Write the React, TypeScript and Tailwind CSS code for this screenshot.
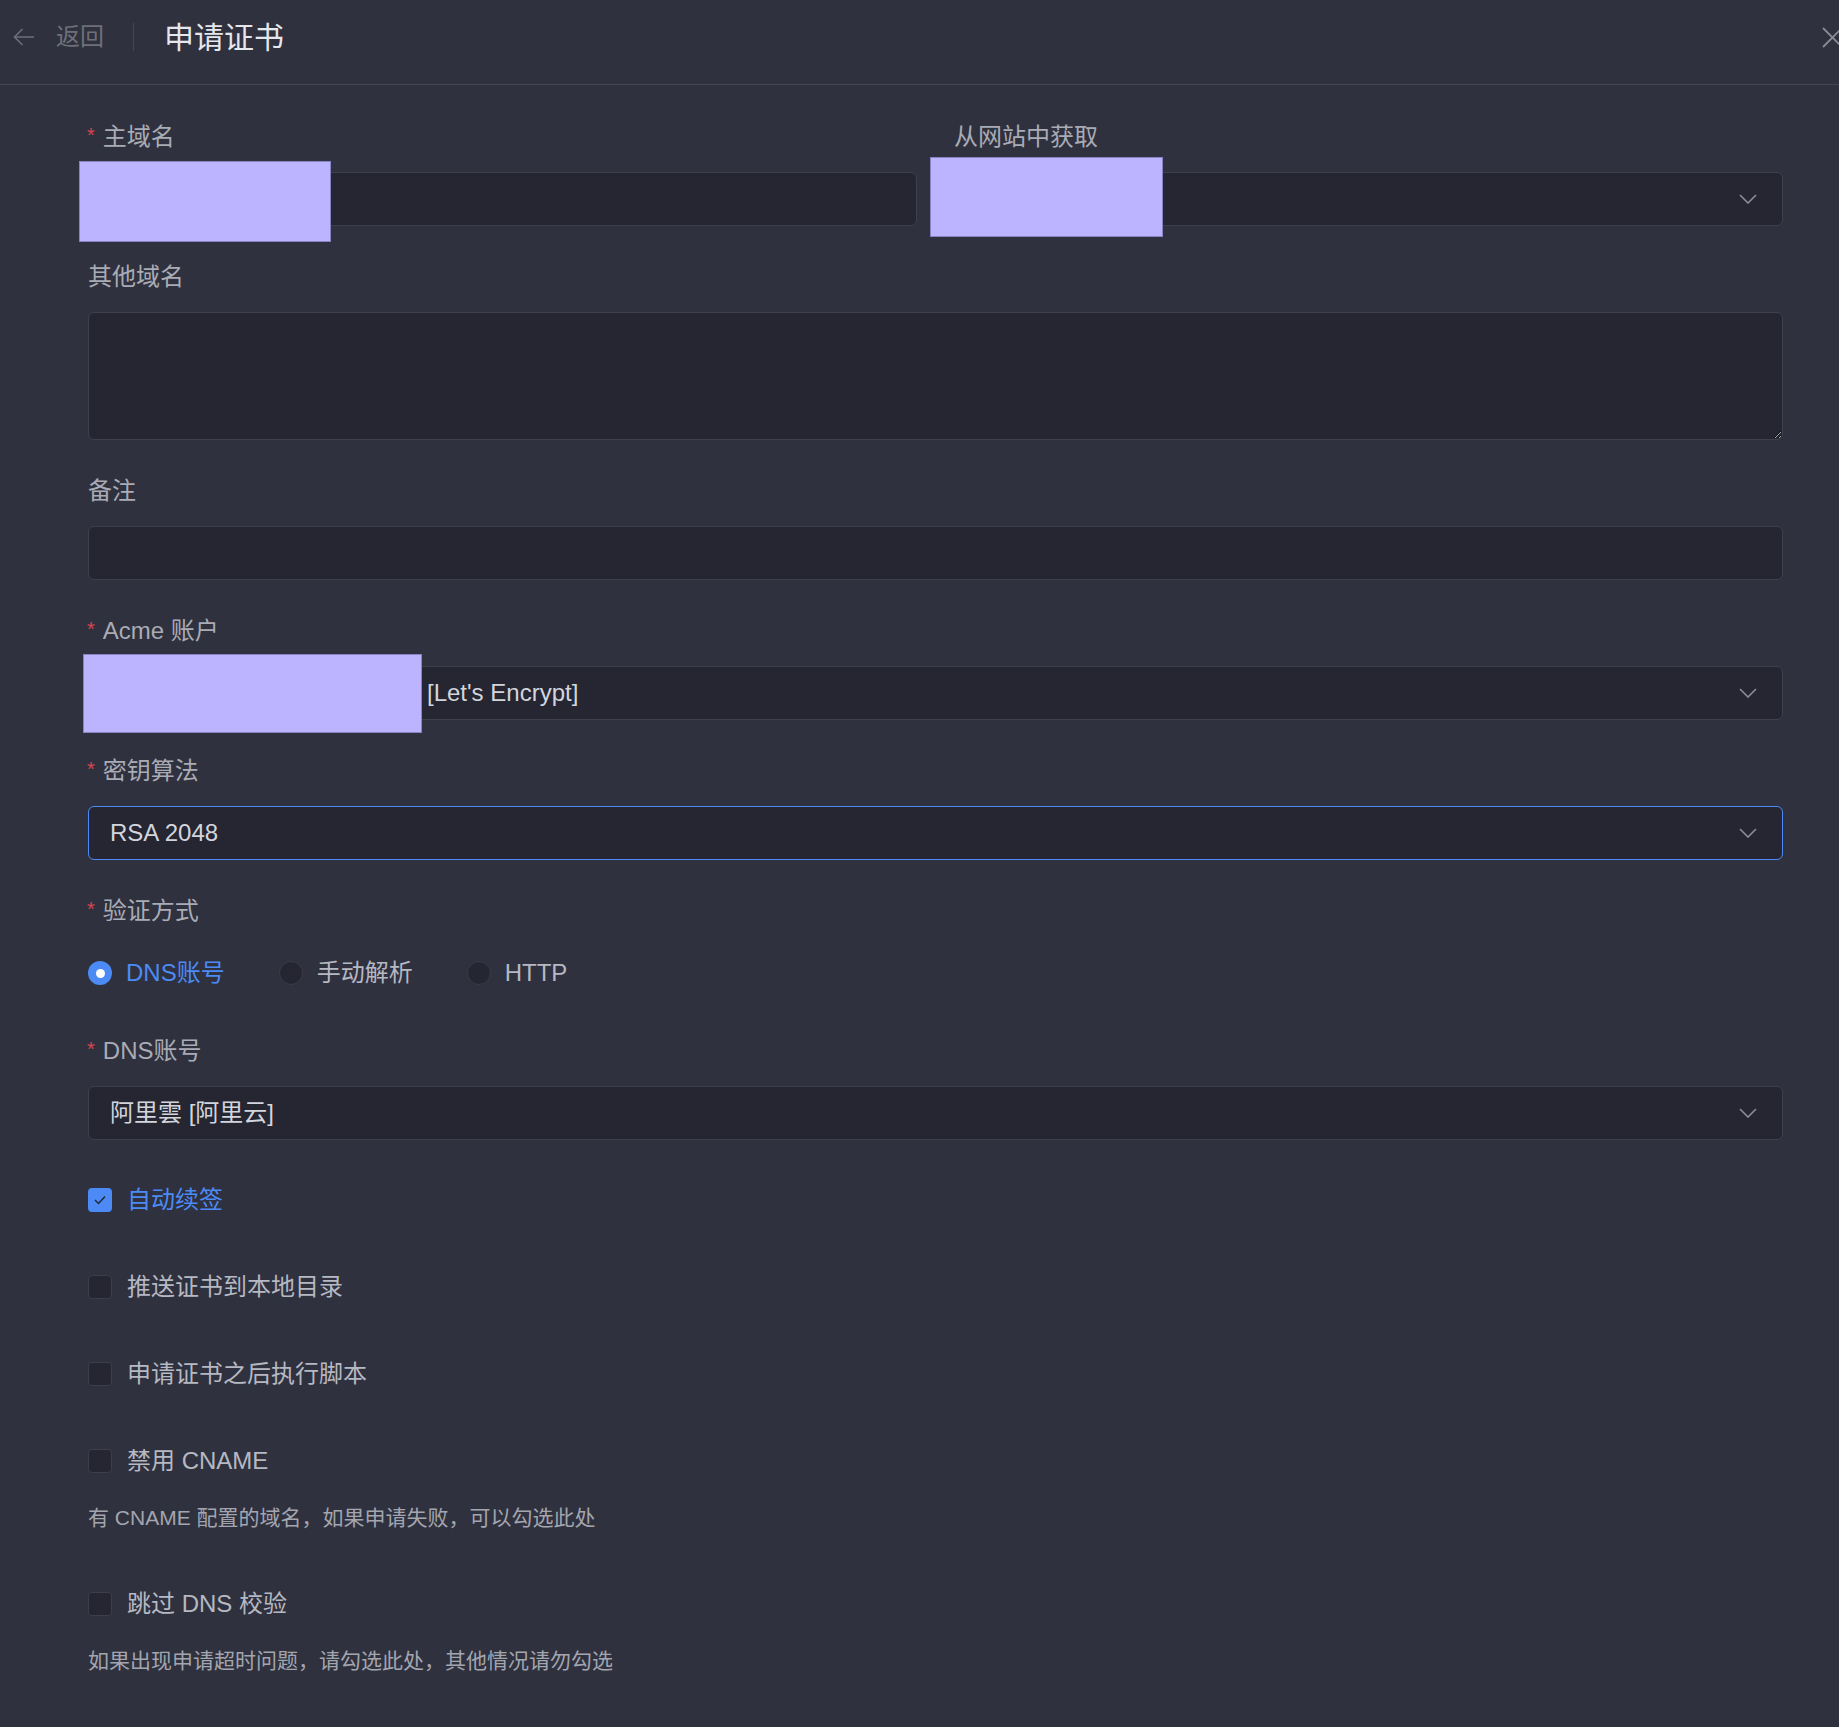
import React from 'react';

/**
 * 申请证书 form (dark theme)
 */

const font = "font-['Liberation_Sans','Noto_Sans_CJK_SC',sans-serif]";

function Chevron() {
  return (
    <svg width="18" height="10" viewBox="0 0 18 10" fill="none" className="shrink-0">
      <path d="M1 1L9 9L17 1" stroke="#8b8d97" strokeWidth="1.6" />
    </svg>
  );
}

function Label({ text, required }: { text: string; required?: boolean }) {
  return (
    <div className="flex items-center h-[36px] mb-[17px] text-[24px] text-[#a9abb5]">
      {required && <span className="text-[#dc4450] text-[20px] mr-[8px] -ml-[1px] -mt-[4px]">*</span>}
      <span>{text}</span>
    </div>
  );
}

function Select({ children, active }: { children?: React.ReactNode; active?: boolean }) {
  return (
    <div
      className={`flex items-center h-[54px] rounded-[6px] border bg-[#252631] pl-[21px] pr-[25px] ${
        active ? 'border-[#4c8bf5]' : 'border-[#3e404c]'
      }`}
    >
      <div className="flex-1 text-[24px] text-[#d3d5dd] whitespace-nowrap">{children}</div>
      <Chevron />
    </div>
  );
}

function Input() {
  return <div className="h-[54px] rounded-[6px] border border-[#3e404c] bg-[#252631]" />;
}

function Redact({ className }: { className: string }) {
  return <div className={`absolute bg-[#bcb4fe] border border-[#8883c2] ${className}`} />;
}

function Radio({ label, checked }: { label: string; checked?: boolean }) {
  return (
    <div className="flex items-center gap-[14px]">
      {checked ? (
        <span className="w-[24px] h-[24px] rounded-full bg-[#4c8bf5] flex items-center justify-center">
          <span className="w-[9px] h-[9px] rounded-full bg-white" />
        </span>
      ) : (
        <span className="w-[24px] h-[24px] rounded-full bg-[#252631] border border-[#3a3c48]" />
      )}
      <span className={`text-[24px] ${checked ? 'text-[#4c8bf5]' : 'text-[#b6b8c2]'}`}>{label}</span>
    </div>
  );
}

function Check({ label, checked, help }: { label: string; checked?: boolean; help?: string }) {
  return (
    <div className={help ? 'mb-[44px]' : 'mb-[33px]'}>
      <div className="flex items-center h-[54px] gap-[15px]">
        {checked ? (
          <span className="w-[24px] h-[24px] rounded-[4px] bg-[#4c8bf5] flex items-center justify-center">
            <svg width="12" height="10" viewBox="0 0 12 10" fill="none">
              <path d="M1 5L4.5 8.5L11 1.5" stroke="#23252f" strokeWidth="1.4" />
            </svg>
          </span>
        ) : (
          <span className="w-[24px] h-[24px] rounded-[4px] bg-[#252631] border border-[#3c3e4a]" />
        )}
        <span className={`text-[24px] ${checked ? 'text-[#4c8bf5]' : 'text-[#b6b8c2]'}`}>{label}</span>
      </div>
      {help && <p className="mt-[15px] text-[21px] leading-[30px] text-[#a3a5af]">{help}</p>}
    </div>
  );
}

export default function App() {
  return (
    <div className={`min-h-screen w-[1839px] overflow-hidden bg-[#2f313e] ${font}`}>
      {/* Header */}
      <div className="h-[85px] border-b border-[#45474f] flex items-start pt-[19px] pl-[13px]">
        <div className="flex items-center h-[36px] w-full">
          <svg width="22" height="18" viewBox="0 0 22 18" fill="none">
            <path d="M21 9H1.5M9.5 1L1.5 9L9.5 17" stroke="#6d6f79" strokeWidth="1.6" />
          </svg>
          <span className="ml-[21px] text-[24px] text-[#6e7079]">返回</span>
          <span className="ml-[29px] w-px h-[28px] bg-[#45474f]" />
          <span className="ml-[30px] text-[30px] text-[#e6e7ec]">申请证书</span>
          <svg width="21" height="21" viewBox="0 0 21 21" fill="none" className="ml-auto -mr-[4px] shrink-0">
            <path d="M1 1L20 20M20 1L1 20" stroke="#8a8b93" strokeWidth="1.8" />
          </svg>
        </div>
      </div>

      {/* Form */}
      <div className="pt-[34px] pl-[88px] w-[1783px] pb-[51px]">
        <div className="grid grid-cols-2 gap-x-[37px] mb-[33px]">
          <div className="relative">
            <Label text="主域名" required />
            <Input />
            <Redact className="-left-[9px] top-[42px] w-[252px] h-[81px]" />
          </div>
          <div className="relative">
            <Label text="从网站中获取" />
            <Select />
            <Redact className="-left-[24px] top-[38px] w-[233px] h-[80px]" />
          </div>
        </div>

        <div className="mb-[33px]">
          <Label text="其他域名" />
          <textarea className="block w-full h-[128px] rounded-[6px] border border-[#3e404c] bg-[#252631] [color-scheme:dark] outline-none" />
        </div>

        <div className="mb-[33px]">
          <Label text="备注" />
          <Input />
        </div>

        <div className="relative mb-[33px]">
          <Label text="Acme 账户" required />
          <Select>
            <span className="inline-block w-[317px]" />
            [Let's Encrypt]
          </Select>
          <Redact className="-left-[5px] top-[41px] w-[339px] h-[79px]" />
        </div>

        <div className="mb-[33px]">
          <Label text="密钥算法" required />
          <Select active>RSA 2048</Select>
        </div>

        <div className="mb-[33px]">
          <Label text="验证方式" required />
          <div className="flex items-center h-[54px] gap-[54px]">
            <Radio label="DNS账号" checked />
            <Radio label="手动解析" />
            <Radio label="HTTP" />
          </div>
        </div>

        <div className="mb-[33px]">
          <Label text="DNS账号" required />
          <Select>阿里雲 [阿里云]</Select>
        </div>

        <Check label="自动续签" checked />
        <Check label="推送证书到本地目录" />
        <Check label="申请证书之后执行脚本" />
        <Check label="禁用 CNAME" help="有 CNAME 配置的域名，如果申请失败，可以勾选此处" />
        <Check label="跳过 DNS 校验" help="如果出现申请超时问题，请勾选此处，其他情况请勿勾选" />
      </div>
    </div>
  );
}
